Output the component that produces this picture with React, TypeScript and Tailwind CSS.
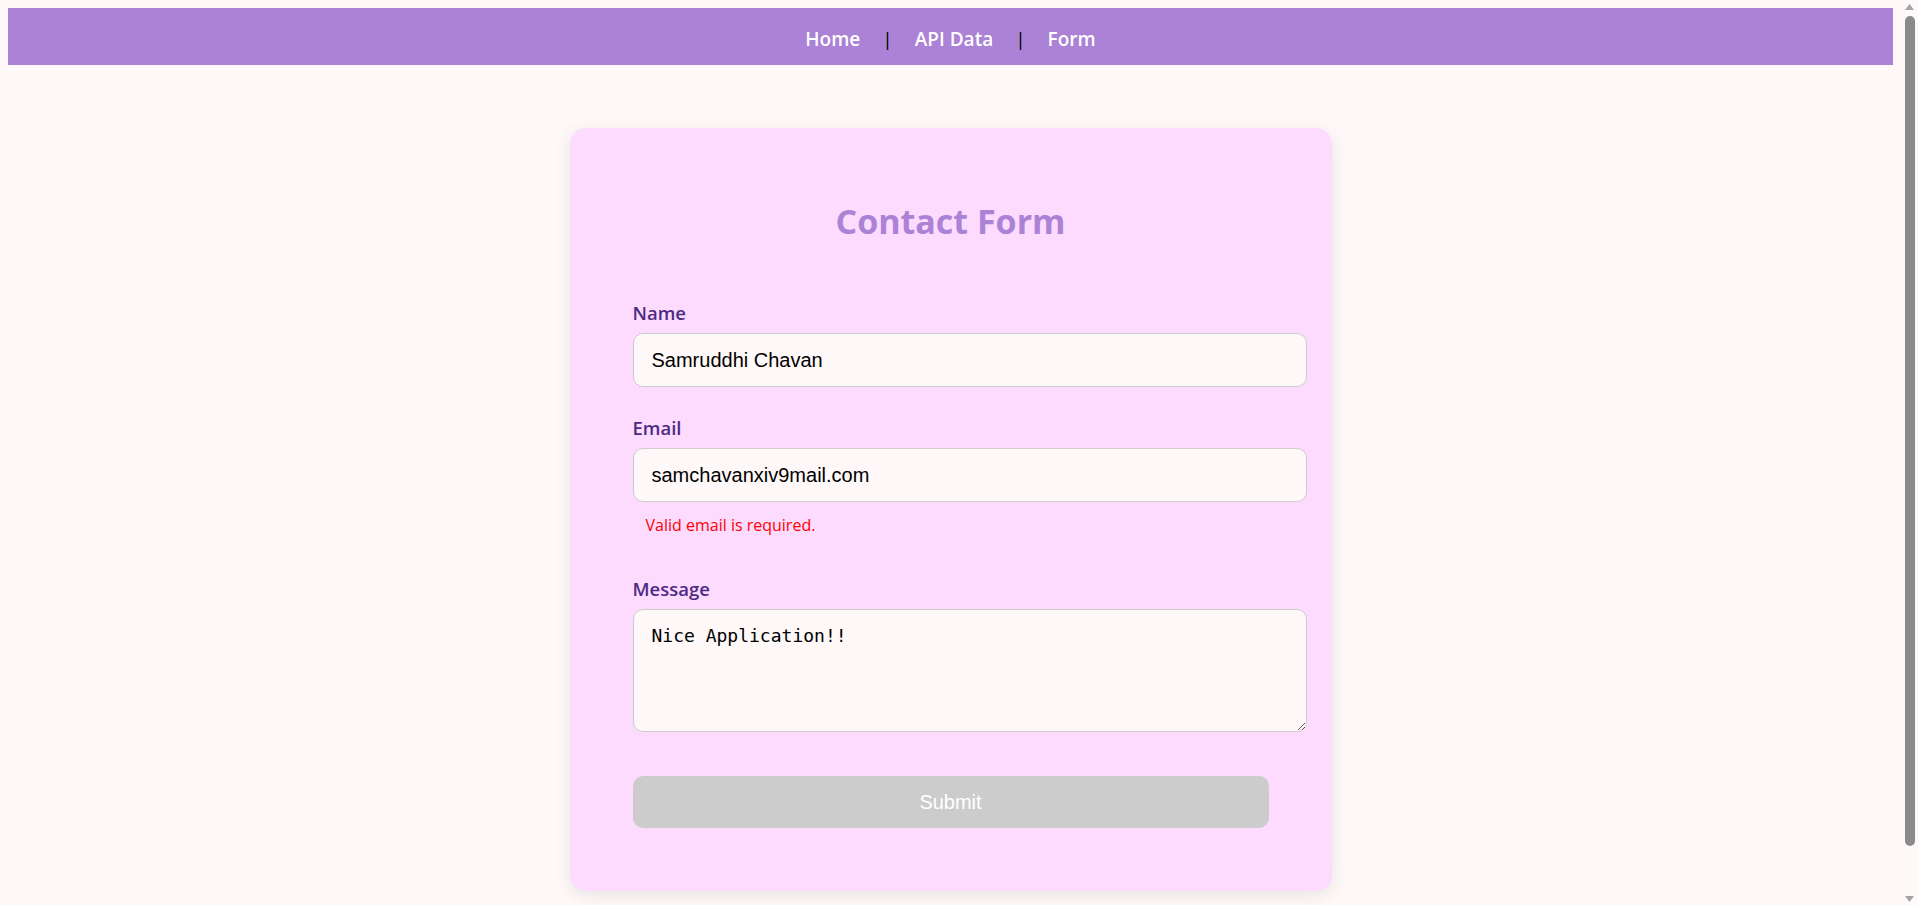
import { useState } from 'react';

const links = ['Home', 'API Data', 'Form'];

function Field({ label, children }: { label: string; children: React.ReactNode }) {
  return (
    <div>
      <label className="mb-[8px] block text-[18.5px] font-semibold leading-[24px] text-[#4e2a84]">{label}</label>
      {children}
    </div>
  );
}

// the page scrollbar seen at the right edge
function Scrollbar() {
  return (
    <div className="fixed top-0 right-0 h-screen w-[17px] bg-[#fdf9f9]">
      <svg className="absolute top-[4px] left-[4px]" width="9" height="6" viewBox="0 0 9 6">
        <path d="M0 6 L4.5 0 L9 6 Z" fill="#a3a3a3" />
      </svg>
      <div className="absolute top-[16px] bottom-[59px] left-[4px] w-[10px] rounded-full bg-[#8a8a8a]" />
      <svg className="absolute bottom-[3px] left-[4px]" width="9" height="6" viewBox="0 0 9 6">
        <path d="M0 0 L9 0 L4.5 6 Z" fill="#a3a3a3" />
      </svg>
    </div>
  );
}

export default function App() {
  const [name, setName] = useState('Samruddhi Chavan');
  const [email, setEmail] = useState('samchavanxiv9mail.com');
  const [message, setMessage] = useState('Nice Application!!');

  const inputCls =
    "block w-[674px] rounded-[10px] border border-[#cccccc] bg-[#fff8f8] px-[18px] font-['Liberation_Sans',Arial,sans-serif] text-[20px] text-black outline-none";

  return (
    <div className="min-h-screen bg-[#fff8f8] pr-[17px] font-['Open_Sans',sans-serif]">
      <div className="p-2">
        <nav className="flex h-[57px] items-center justify-center gap-[22px] bg-[#ab82d6] pt-[5px] text-[19px] font-semibold text-white">
          {links.map((link, i) => (
            <div key={link} className="flex items-center gap-[22px]">
              {i > 0 && <span className="font-normal text-black">|</span>}
              <a href="#" className="text-white">
                {link}
              </a>
            </div>
          ))}
        </nav>

        <main className="flex justify-center pt-[63px] pb-[63px]">
          <div className="w-[762px] rounded-2xl bg-[#fcdbff] px-[63px] pt-[71px] pb-[63px] shadow-[0_4px_18px_rgba(0,0,0,0.09)]">
            <h2 className="text-center text-[34px] font-bold leading-[44px] text-[#ab82d6]">Contact Form</h2>

            <form className="mt-[58px]" onSubmit={(e) => e.preventDefault()}>
              <Field label="Name">
                <input className={`${inputCls} h-[54px]`} value={name} onChange={(e) => setName(e.target.value)} />
              </Field>

              <div className="mt-[29px]">
                <Field label="Email">
                  <input className={`${inputCls} h-[54px]`} value={email} onChange={(e) => setEmail(e.target.value)} />
                </Field>
                <p className="mt-[13px] ml-[13px] text-[16px] leading-[20px] text-[#ff0000]">Valid email is required.</p>
              </div>

              <div className="mt-[42px]">
                <Field label="Message">
                  <textarea
                    className="block h-[123px] w-[674px] rounded-[10px] border border-[#cccccc] bg-[#fff8f8] px-[18px] py-[15px] font-['DejaVu_Sans_Mono',monospace] text-[18px] leading-[21px] text-black outline-none"
                    value={message}
                    onChange={(e) => setMessage(e.target.value)}
                  />
                </Field>
              </div>

              <button
                type="submit"
                disabled
                className="mt-[44px] block h-[52px] w-full rounded-[10px] bg-[#cccccc] font-['Liberation_Sans',Arial,sans-serif] text-[20px] text-white"
              >
                Submit
              </button>
            </form>
          </div>
        </main>
      </div>
      <Scrollbar />
    </div>
  );
}
